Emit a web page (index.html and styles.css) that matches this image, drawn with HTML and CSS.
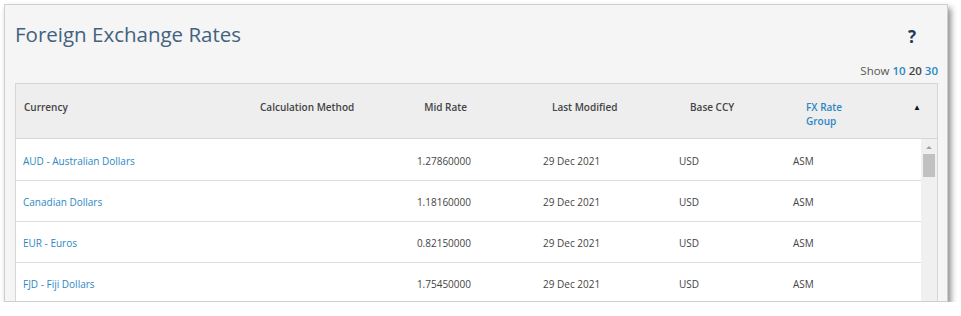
FILE: index.html
```html
<!DOCTYPE html>
<html lang="en">
<head>
    <meta charset="UTF-8">
    <title>Foreign Exchange Rates</title>
    <link rel="stylesheet" href="styles.css">
</head>
<body>
    <div class="panel">
        <div class="panel-head">
            <h1>Foreign Exchange Rates</h1>
            <span class="help">?</span>
        </div>

        <div class="pager">
            Show <a href="#">10</a> <span class="current">20</span> <a href="#">30</a>
        </div>

        <div class="grid">
            <div class="grid-head">
                <div class="hcell">Currency</div>
                <div class="hcell">Calculation Method</div>
                <div class="hcell num">Mid Rate</div>
                <div class="hcell">Last Modified</div>
                <div class="hcell">Base CCY</div>
                <div class="hcell link">FX Rate<br>Group</div>
                <div class="hcell sort">&#9650;</div>
            </div>

            <div class="grid-body">
                <div class="rows">
                    <div class="row">
                        <div class="cell"><a href="#">AUD - Australian Dollars</a></div>
                        <div class="cell"></div>
                        <div class="cell num">1.27860000</div>
                        <div class="cell">29 Dec 2021</div>
                        <div class="cell">USD</div>
                        <div class="cell">ASM</div>
                    </div>
                    <div class="row">
                        <div class="cell"><a href="#">Canadian Dollars</a></div>
                        <div class="cell"></div>
                        <div class="cell num">1.18160000</div>
                        <div class="cell">29 Dec 2021</div>
                        <div class="cell">USD</div>
                        <div class="cell">ASM</div>
                    </div>
                    <div class="row">
                        <div class="cell"><a href="#">EUR - Euros</a></div>
                        <div class="cell"></div>
                        <div class="cell num">0.82150000</div>
                        <div class="cell">29 Dec 2021</div>
                        <div class="cell">USD</div>
                        <div class="cell">ASM</div>
                    </div>
                    <div class="row">
                        <div class="cell"><a href="#">FJD - Fiji Dollars</a></div>
                        <div class="cell"></div>
                        <div class="cell num">1.75450000</div>
                        <div class="cell">29 Dec 2021</div>
                        <div class="cell">USD</div>
                        <div class="cell">ASM</div>
                    </div>
                </div>
                <div class="scrollbar">
                    <div class="scroll-up"></div>
                    <div class="scroll-thumb"></div>
                </div>
            </div>
        </div>
    </div>
</body>
</html>
```

FILE: styles.css
```css
body {
    margin: 0;
    background-color: #fff;
    font-family: "Open Sans", "Noto Sans", sans-serif;
    color: #444;
}

a {
    color: #2d87c3;
    text-decoration: none;
}

.panel {
    box-sizing: border-box;
    width: 944px;
    height: 298px;
    margin: 4px 0 0 4px;
    padding: 0 9px 0 10px;
    background-color: #f5f5f5;
    border: 1px solid #cfcfcf;
    box-shadow: 3px 4px 6px rgba(0, 0, 0, 0.45);
    overflow: hidden;
}

.panel-head {
    display: flex;
    justify-content: space-between;
    align-items: center;
    padding-top: 15px;
}

.panel-head h1 {
    margin: 0;
    font-size: 20.5px;
    font-weight: 400;
    color: #42627e;
}

.help {
    margin-right: 22px;
    margin-top: 5px;
    font-size: 17px;
    font-weight: 700;
    color: #1d3a5a;
}

.pager {
    text-align: right;
    font-size: 11.5px;
    color: #555;
    margin-top: 15px;
    height: 20px;
}

.pager a,
.pager .current {
    font-weight: 600;
}

.pager .current {
    color: #444;
}

.grid {
    border: 1px solid #d6d6d6;
    background-color: #fff;
}

.grid-head,
.row {
    display: grid;
    grid-template-columns: 236px 148px 135px 136px 114px 115px 1fr;
    font-size: 10px;
}

.grid-head {
    height: 54px;
    background-color: #eee;
    border-bottom: 1px solid #d6d6d6;
}

.hcell {
    padding: 16px 0 0 8px;
    line-height: 14px;
    font-weight: 600;
    color: #444;
}

.hcell.num {
    text-align: right;
    padding-right: 68px;
}

.hcell:nth-child(4) { padding-left: 17px; }
.hcell:nth-child(5) { padding-left: 19px; }
.hcell:nth-child(6) { padding-left: 21px; }

.hcell.link {
    color: #2d87c3;
}

.hcell.sort {
    padding-left: 13px;
    font-size: 8px;
    color: #111;
}

.grid-body {
    display: flex;
}

.rows {
    flex: 1;
}

.row {
    grid-template-columns: 236px 148px 135px 136px 114px 1fr;
    box-sizing: border-box;
    height: 41px;
    padding-top: 2px;
    border-bottom: 1px solid #ddd;
    align-items: center;
}

.row:first-child {
    height: 42px;
}

.cell {
    padding-left: 7px;
}

.cell:nth-child(n+3) {
    padding-left: 8px;
}

.cell.num {
    text-align: right;
    padding-right: 64px;
}

.scrollbar {
    width: 16px;
    background-color: #f0f0f0;
    padding-top: 7px;
}

.scroll-up {
    width: 0;
    height: 0;
    margin: 0 auto 5px;
    border-left: 3px solid transparent;
    border-right: 3px solid transparent;
    border-bottom: 3px solid #a3a3a3;
}

.scroll-thumb {
    width: 12px;
    height: 23px;
    margin: 0 auto;
    background-color: #c1c1c1;
}
```
